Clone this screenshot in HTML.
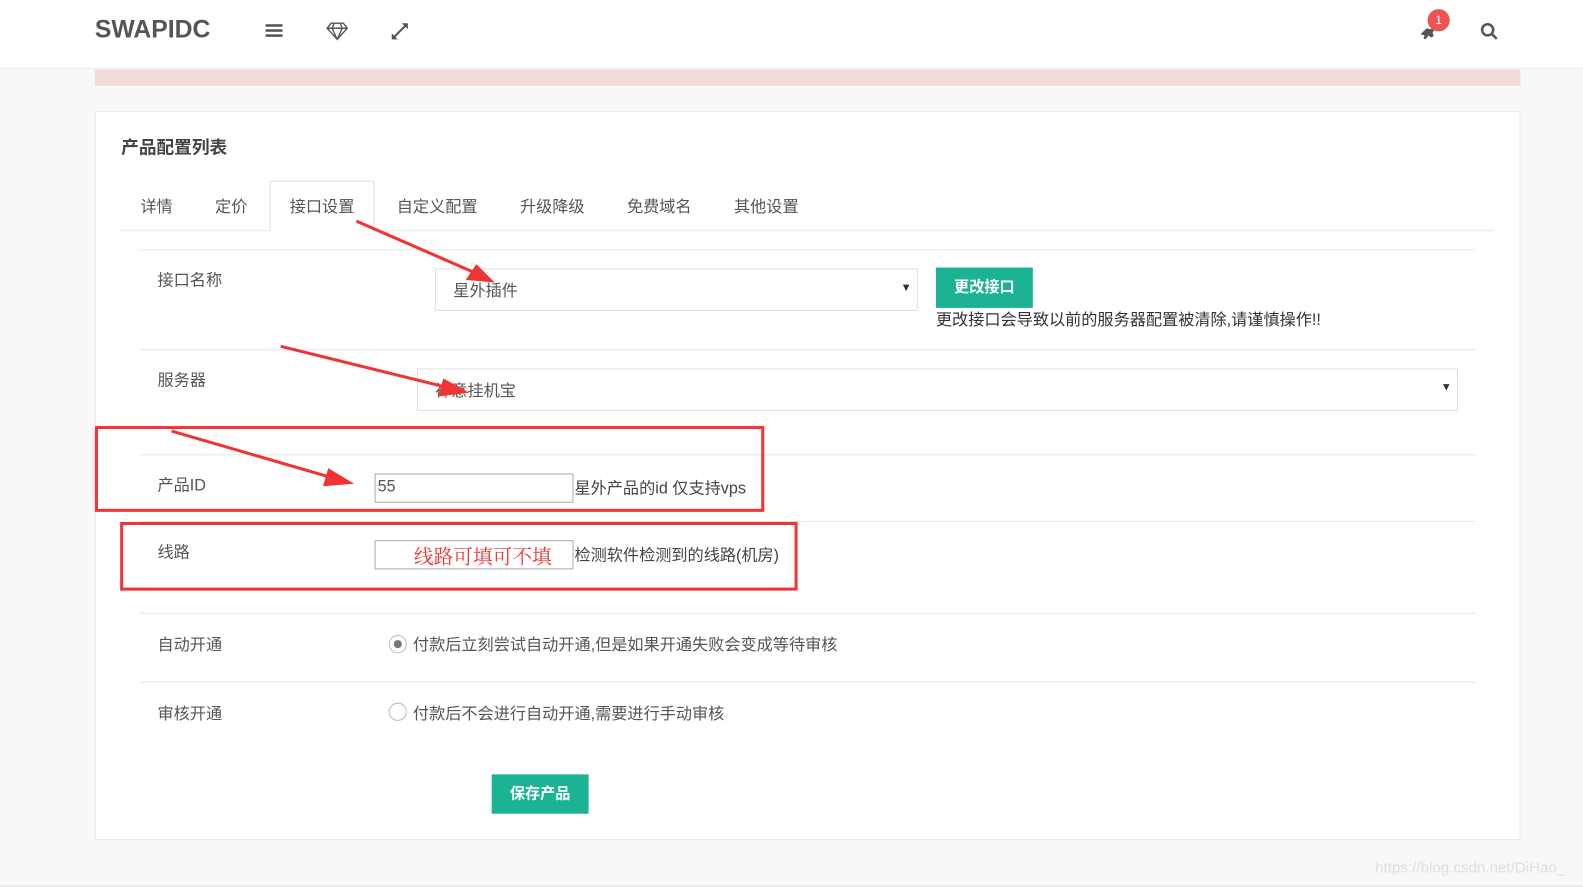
<!DOCTYPE html>
<html><head><meta charset="utf-8"><style>
*{box-sizing:border-box;margin:0;padding:0}
body{width:1583px;height:887px;background:#f8f8f9;font-family:"Liberation Sans","Noto Sans CJK SC",sans-serif;color:#555;position:relative;overflow:hidden;font-size:16px}
#w{position:absolute;left:0;top:0;width:1568px;height:879px;transform:scale(1.0096);transform-origin:0 0}
.a{position:absolute}
.hdr{left:0;top:0;width:1568px;height:68px;background:#fff;border-bottom:1px solid #e9e9e9}
.line{height:1px;background:#e6e6e6}
.lbl{font-size:16px;color:#555;margin-top:-4px}
.inp{border:1px solid #ddd;background:#fff}
.btn{background:#1bb394;color:#fff;font-size:15px;font-weight:bold;text-align:center}
.red{border:3px solid #f03333}
</style></head><body><div id="w">
<div class="a hdr"></div>
<div class="a" style="left:94px;top:16px;font-size:24.5px;font-weight:bold;color:#555">SWAPIDC</div>
<svg class="a" style="left:263px;top:23px" width="17" height="15"><rect y="1" width="17" height="2.5" fill="#555"/><rect y="6" width="17" height="2.5" fill="#555"/><rect y="11" width="17" height="2.5" fill="#555"/></svg>
<svg class="a" style="left:323px;top:21px" width="22" height="19" fill="none" stroke="#555" stroke-width="1.4"><path d="M5 2h12l4 5-10 11L1 7z M1 7h20 M8 2l-2 5 5 11 5-11-2-5"/></svg>
<svg class="a" style="left:387px;top:22px" width="18" height="18" fill="#555" stroke="#555" stroke-width="2"><path d="M3 15l12-12"/><path d="M17 1v6l-6-6z" stroke-width="0"/><path d="M1 17v-6l6 6z" stroke-width="0"/></svg>
<svg class="a" style="left:1405px;top:24px" width="18" height="16" fill="#555"><path d="M2 10l6-6 4 1 4-3 1 2-3 4 1 4-3 1-2-2-3 4-2-1 1-3z"/></svg>
<div class="a" style="left:1414px;top:9px;width:22px;height:22px;border-radius:50%;background:#ef5352;color:#fff;font-size:12px;text-align:center;line-height:22px">1</div>
<svg class="a" style="left:1466px;top:22px" width="18" height="18" fill="none" stroke="#555" stroke-width="2.5"><circle cx="7.5" cy="7.5" r="5.5"/><path d="M11.5 11.5l5 5"/></svg>
<div class="a" style="left:94px;top:69px;width:1412px;height:16px;background:#f2d9da"></div>
<div class="a" style="left:94px;top:110px;width:1412px;height:722px;background:#fff;border:1px solid #e7eaec"></div>
<div class="a" style="left:120px;top:133px;font-size:17.5px;font-weight:bold;color:#444">产品配置列表</div>
<div class="a line" style="left:120px;top:228px;width:1360px"></div>
<div class="a" style="left:267px;top:179px;width:104px;height:50px;background:#fff;border:1px solid #ddd;border-bottom:none"></div>
<div class="a lbl" style="left:139px;top:195px">详情</div>
<div class="a lbl" style="left:213px;top:195px">定价</div>
<div class="a lbl" style="left:287px;top:195px">接口设置</div>
<div class="a lbl" style="left:393px;top:195px">自定义配置</div>
<div class="a lbl" style="left:515px;top:195px">升级降级</div>
<div class="a lbl" style="left:621px;top:195px">免费域名</div>
<div class="a lbl" style="left:727px;top:195px">其他设置</div>
<div class="a line" style="left:138px;top:247px;width:1323px"></div>
<div class="a line" style="left:138px;top:346px;width:1323px"></div>
<div class="a line" style="left:138px;top:450px;width:1323px"></div>
<div class="a line" style="left:138px;top:516px;width:1323px"></div>
<div class="a line" style="left:138px;top:607px;width:1323px"></div>
<div class="a line" style="left:138px;top:675px;width:1323px"></div>
<div class="a lbl" style="left:156px;top:268px">接口名称</div>
<div class="a inp" style="left:431px;top:266px;width:478px;height:42px"></div>
<div class="a lbl" style="left:449px;top:278px">星外插件</div>
<div class="a" style="left:892px;top:279px;font-size:11px;color:#333">▼</div>
<div class="a btn" style="left:927px;top:265px;width:96px;height:40px;line-height:40px">更改接口</div>
<div class="a lbl" style="left:927px;top:307px;color:#333">更改接口会导致以前的服务器配置被清除,请谨慎操作!!</div>
<div class="a lbl" style="left:156px;top:367px">服务器</div>
<div class="a inp" style="left:413px;top:365px;width:1031px;height:42px"></div>
<div class="a lbl" style="left:431px;top:377px">禅意挂机宝</div>
<div class="a" style="left:1427px;top:378px;font-size:11px;color:#333">▼</div>
<div class="a lbl" style="left:156px;top:471px">产品ID</div>
<div class="a" style="left:371px;top:469px;width:197px;height:29px;border:1px solid #aaa"></div>
<div class="a" style="left:374px;top:474px;font-size:16px;color:#555">55</div>
<div class="a lbl" style="left:569px;top:474px;color:#444">星外产品的id 仅支持vps</div>
<div class="a lbl" style="left:156px;top:537px">线路</div>
<div class="a" style="left:371px;top:535px;width:197px;height:29px;border:1px solid #aaa"></div>
<div class="a" style="left:410px;top:536px;font-size:19.5px;color:#f03333;font-family:'Noto Serif CJK SC',serif">线路可填可不填</div>
<div class="a lbl" style="left:569px;top:540px;color:#444">检测软件检测到的线路(机房)</div>
<div class="a red" style="left:94px;top:422px;width:663px;height:85px"></div>
<div class="a red" style="left:119px;top:517px;width:671px;height:68px"></div>
<div class="a lbl" style="left:156px;top:629px">自动开通</div>
<div class="a" style="left:385px;top:629px;width:18px;height:18px;border:1px solid #bbb;border-radius:50%"></div>
<div class="a" style="left:390px;top:634px;width:8px;height:8px;background:#777;border-radius:50%"></div>
<div class="a lbl" style="left:409px;top:629px">付款后立刻尝试自动开通,但是如果开通失败会变成等待审核</div>
<div class="a lbl" style="left:156px;top:697px">审核开通</div>
<div class="a" style="left:385px;top:696px;width:18px;height:18px;border:1px solid #bbb;border-radius:50%"></div>
<div class="a lbl" style="left:409px;top:697px">付款后不会进行自动开通,需要进行手动审核</div>
<div class="a btn" style="left:487px;top:767px;width:96px;height:39px;line-height:39px">保存产品</div>
<svg class="a" style="left:0;top:0" width="1568" height="879">
<g stroke="#f03333" stroke-width="3" fill="#f03333">
<line x1="353" y1="219" x2="470" y2="270"/><path d="M486 278l-22-2 8-12z"/>
<line x1="278" y1="343" x2="440" y2="383"/><path d="M460 388l-24 3 4-14z"/>
<line x1="170" y1="427" x2="325" y2="472"/><path d="M346 478l-24 2 4-14z"/>
</g></svg>
<div class="a line" style="left:0;top:877px;width:1568px;background:#e3e3e3"></div>
<div class="a" style="left:1362px;top:851px;font-size:15px;color:#ddd">https://blog.csdn.net/DiHao_</div>
</div></body></html>
